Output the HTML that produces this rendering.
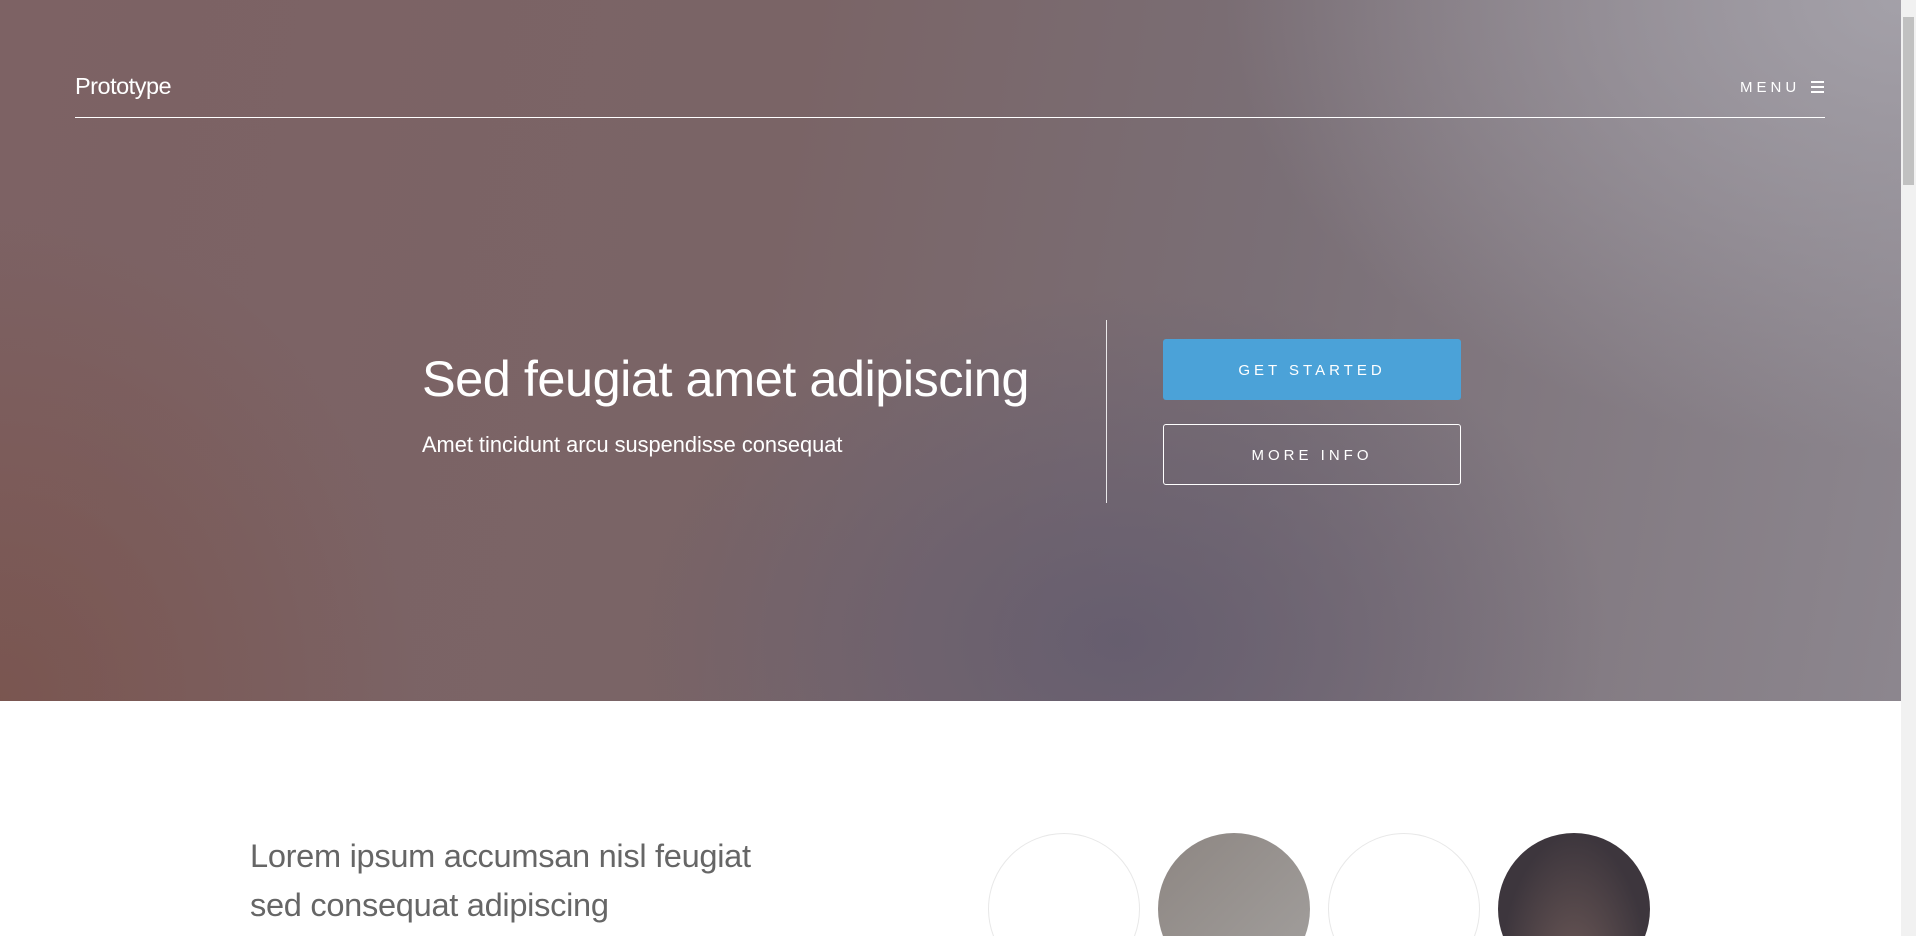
<!DOCTYPE html>
<html><head><meta charset="utf-8"><style>
html,body{margin:0;padding:0;width:1916px;height:936px;overflow:hidden;font-family:"Liberation Sans",sans-serif;background:#fff}
.wrap{position:relative;width:1916px;height:936px;overflow:hidden}
.hero{position:absolute;left:0;top:0;width:1901px;height:701px;overflow:hidden;
background:
radial-gradient(ellipse 700px 500px at 1120px 640px, rgba(100,92,110,0.9), rgba(100,92,110,0) 70%),
radial-gradient(ellipse 900px 600px at 1900px 0px, rgba(165,162,170,0.95), rgba(150,145,155,0) 75%),
radial-gradient(ellipse 600px 700px at 0px 700px, rgba(122,84,78,0.9), rgba(122,84,78,0) 70%),
linear-gradient(100deg,#7d6264 0%,#7a6466 40%,#7a6f76 65%,#8c868e 100%);}
.sb{position:absolute;left:1901px;top:0;width:15px;height:936px;background:#f1f1f1}
.sb i{position:absolute;left:2px;top:17px;width:11px;height:168px;background:#c1c1c1}
.logo{position:absolute;left:75px;top:73px;color:#fff;font-size:23.5px;letter-spacing:-0.5px}
.menu{position:absolute;left:1740px;top:79px;color:#fff;font-size:15px;letter-spacing:4px}
.ham{position:absolute;left:1811px;top:81px;width:13px}
.ham b{display:block;height:2px;background:#fff;margin-bottom:3px}
.line{position:absolute;left:75px;top:117px;width:1750px;height:1px;background:#fff}
h1{position:absolute;left:422px;top:349px;margin:0;color:#fff;font-weight:normal;font-size:50.5px;letter-spacing:-0.5px;white-space:nowrap}
.sub{position:absolute;left:422px;top:432px;color:#fff;font-size:21.8px;white-space:nowrap}
.vl{position:absolute;left:1106px;top:320px;width:1px;height:183px;background:rgba(255,255,255,0.85)}
.btn{position:absolute;left:1163px;width:298px;height:61px;box-sizing:border-box;border-radius:3px;color:#fff;font-size:15px;letter-spacing:4px;text-align:center;line-height:63px}
.b1{top:339px;background:#4ba2d8}
.b2{top:424px;border:1.5px solid #fff;line-height:61px}
.lead{position:absolute;left:250px;top:831px;color:#666;font-size:32.6px;line-height:49px;letter-spacing:-0.3px;white-space:nowrap}
.c{position:absolute;top:833px;width:152px;height:152px;border-radius:50%;box-sizing:border-box}
</style></head><body><div class="wrap">
<div class="hero">
<div class="logo">Prototype</div>
<div class="menu">MENU</div>
<div class="ham"><b></b><b></b><b></b></div>
<div class="line"></div>
<h1>Sed feugiat amet adipiscing</h1>
<div class="sub">Amet tincidunt arcu suspendisse consequat</div>
<div class="vl"></div>
<div class="btn b1">GET STARTED</div>
<div class="btn b2">MORE INFO</div>
</div>
<div class="lead">Lorem ipsum accumsan nisl feugiat<br>sed consequat adipiscing</div>
<div class="c" style="left:988px;border:1px solid #e8e8e8"></div>
<div class="c" style="left:1158px;background:linear-gradient(135deg,#8d8682,#a3a09e)"></div>
<div class="c" style="left:1328px;border:1px solid #e8e8e8"></div>
<div class="c" style="left:1498px;background:radial-gradient(ellipse at 50% 100%,#6e5a58,#3d363d 70%)"></div>
<div class="sb"><i></i></div>
</div></body></html>
